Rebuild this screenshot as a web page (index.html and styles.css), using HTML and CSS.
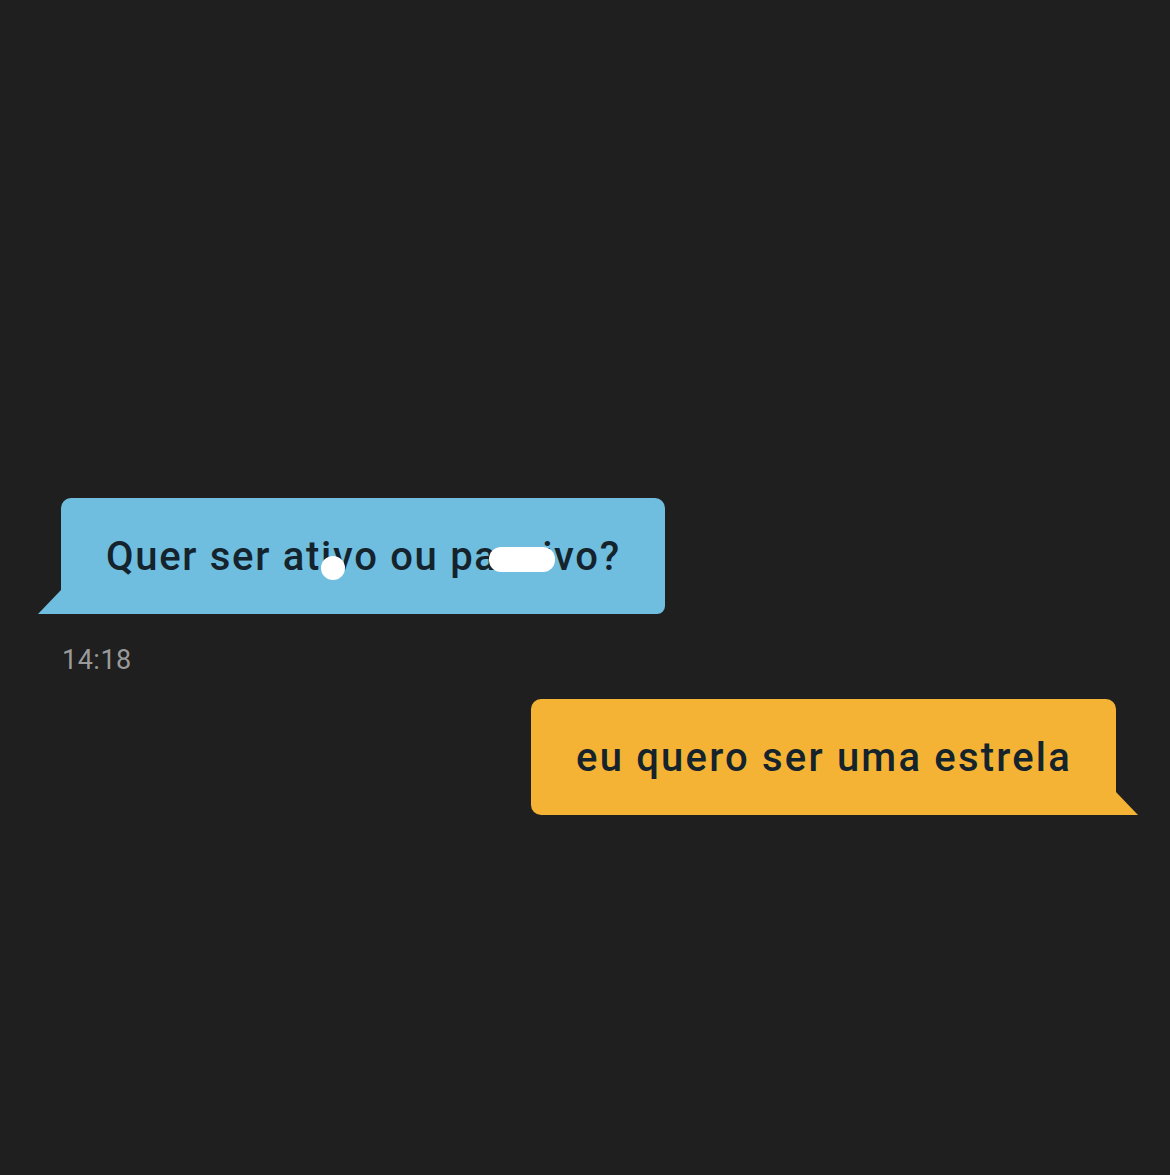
FILE: index.html
```html
<!DOCTYPE html>
<html lang="en">
<head>
    <meta charset="UTF-8">
    <meta name="viewport" content="width=device-width, initial-scale=1.0">
    <title>Chat</title>
    <link rel="stylesheet" href="styles.css">
</head>
<body>
    <div class="chat">
        <div class="msg msg-in">
            <div class="bubble bubble-in">Quer ser at<span class="blot-dot">i</span>vo ou pa<span class="blot-pill">ss</span>ivo?</div>
            <div class="time">14:18</div>
        </div>

        <div class="msg msg-out">
            <div class="bubble bubble-out">eu quero ser uma estrela</div>
        </div>
    </div>
</body>
</html>
```

FILE: styles.css
```css
:root {
    --bg: #1f1f1f;
    --blue: #6fbedf;
    --orange: #f5b335;
    --ink: #14232c;
    --muted: #9a9a9a;
}

body {
    margin: 0;
    background: var(--bg);
    font-family: Roboto, 'Liberation Sans', sans-serif;
    min-height: 1175px;
}

.chat {
    display: flex;
    flex-direction: column;
    padding: 498px 32px 0 38px;
}

.msg {
    display: flex;
    flex-direction: column;
}

.msg-in {
    align-items: flex-start;
}

.msg-out {
    align-items: flex-end;
    margin-top: 23px;
}

.bubble {
    position: relative;
    height: 116px;
    display: flex;
    align-items: center;
    padding: 0 44px 0 45px;
    font-size: 40px;
    font-weight: 500;
    color: var(--ink);
    box-sizing: border-box;
}

.bubble::before {
    content: '';
    position: absolute;
    bottom: 0;
    width: 23px;
    height: 24px;
}

.bubble-in {
    background: var(--blue);
    margin-left: 23px;
    letter-spacing: 1.7px;
    border-radius: 10px 10px 8px 0;
}

.bubble-in::before {
    left: -23px;
    background: var(--blue);
    clip-path: polygon(100% 0, 100% 100%, 0 100%);
}

.bubble-out {
    background: var(--orange);
    margin-right: 22px;
    letter-spacing: 2.2px;
    border-radius: 10px 10px 0 10px;
}

.bubble-out::before {
    right: -22px;
    background: var(--orange);
    clip-path: polygon(0 0, 100% 100%, 0 100%);
}

.blot-dot, .blot-pill {
    position: relative;
}

.blot-dot::after {
    content: '';
    position: absolute;
    left: 0;
    top: 23px;
    width: 24px;
    height: 24px;
    border-radius: 50%;
    background: #fff;
}

.blot-pill::after {
    content: '';
    position: absolute;
    left: -9px;
    right: -13px;
    top: 14px;
    height: 25px;
    border-radius: 12px;
    background: #fff;
}

.time {
    margin: 30px 0 0 24px;
    font-size: 27px;
    letter-spacing: 0.5px;
    color: var(--muted);
}
```
